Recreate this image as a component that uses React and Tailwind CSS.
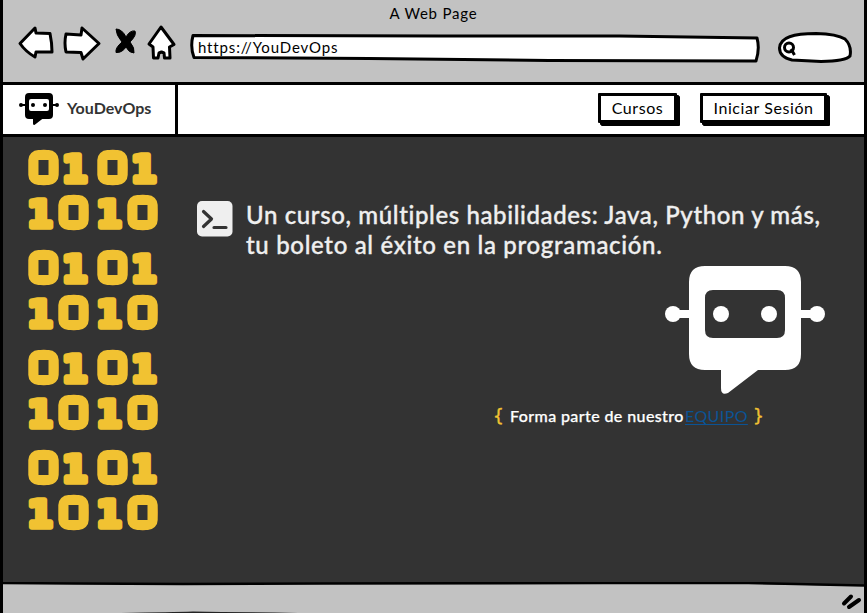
const BotIcon = ({ className }) => (
  <svg viewBox="0 0 160 128" className={className} fill="currentColor">
    <path
      fillRule="evenodd"
      d="M40 0H120Q136 0 136 16V88Q136 104 120 104H93L63 127Q56 130 56 122V104H40Q24 104 24 88V16Q24 0 40 0ZM48 24Q40 24 40 32V64Q40 72 48 72H112Q120 72 120 64V32Q120 24 112 24Z"
    />
    <path d="M8 44H25V52H8ZM135 44H152V52H135Z" />
    <circle cx="8" cy="48" r="8" />
    <circle cx="152" cy="48" r="8" />
    <circle cx="56" cy="48" r="8" />
    <circle cx="104" cy="48" r="8" />
  </svg>
);

const Binary = () => (
  <svg
    viewBox="0 0 62 80"
    className="h-[80px] w-[62px] overflow-visible fill-[#f1c232] stroke-[#f1c232] font-['DejaVu_Sans'] text-[39px] font-bold"
    strokeWidth="5.6"
    strokeLinejoin="round"
    textAnchor="middle"
  >
    <text x="15.5" y="32">0</text>
    <text x="46.8" y="32.200" className="text-[37px]">1</text>
    <text x="12" y="77.200" className="text-[37px]">1</text>
    <text x="45.5" y="77">0</text>
    <rect x="0.3" y="0" width="30.400" height="35" rx="10" stroke="none" />
    <rect x="30.300" y="45" width="30.400" height="35" rx="10" stroke="none" />
    <path d="M10.500 10H20.500V25H10.500ZM40.500 55H50.500V70H40.500Z" fill="#333" stroke="none" />
  </svg>
);

const Toolbar = () => (
  <svg viewBox="0 0 164 40" className="h-[40px] w-[164px]" fill="#fff" stroke="#000" strokeWidth="3" strokeLinejoin="round">
    <path d="M3 19.500L18 4L19 9L33 9.500Q35 19 35 28L19 28L18 33Q9 28 3 19.500Z" />
    <path d="M49 10L64 11L65 4L82 19.500L66 35L64 28.500L49 28Q47 19 49 10Z" />
    <path
      d="M99 5Q105 5 109 13Q113 6 118 7Q120 11 113 18Q118 24 117 29Q112 29 109 23Q105 29 99 28.500Q98 24 105 18Q99 11 99 5Z"
      fill="#000"
      stroke="#000"
      strokeWidth="1"
    />
    <path d="M144 3L157 20.500L152.500 23L153 34H147.500L147 29L144.500 28L142 29L141 34H136.500L136 23L132 20Z" />
  </svg>
);

const NavButton = ({ children, className }) => (
  <button
    className={
      "box-border flex h-[30px] items-center justify-center rounded-[1px] border-[3px] border-black bg-white text-[16px] tracking-[0.58px] text-black shadow-[2px_2px_0_0_#000,3px_3px_0_0_#000] " +
      className
    }
  >
    {children}
  </button>
);

const Header = () => (
  <header className="flex h-[82px] flex-col bg-[#c2c2c2]">
    <div className="flex h-[24px] items-center justify-center pt-[2px] text-[15px] tracking-[0.8px]">A Web Page</div>
    <div className="flex items-start pl-[14px]">
      <Toolbar />
      <div className="relative ml-[8px] mt-[8px] h-[32px] w-[572px]">
        <svg viewBox="0 0 572 32" className="absolute inset-0 h-full w-full" fill="#fff" stroke="#000" strokeWidth="3" strokeLinejoin="round">
          <path d="M4 3.500L250 4L430 4L568 6Q571 17 567 29L360 28.500L180 26.500L5 25.500Q1 15 4 3.500Z" />
        </svg>
        <span className="relative flex h-[30px] items-center pl-[9px] text-[15px] tracking-[0.850px]">https://YouDevOps</span>
      </div>
      <svg viewBox="0 0 78 34" className="ml-[14px] mt-[7px] h-[34px] w-[78px]" fill="#fff" stroke="#000" strokeWidth="3">
        <path d="M4.500 17C5 6 19 2.500 41 2.500Q62 3 70 8Q77 15 75 25Q71 30 46 30.500L17 29Q4.500 26 4.500 17Z" />
        <circle cx="14" cy="16.500" r="4.500" />
        <path d="M16 18L19.500 24" />
      </svg>
    </div>
  </header>
);

export default function App() {
  return (
    <div className="relative flex h-[613px] w-[867px] flex-col overflow-hidden border-l-[3px] border-r-[3px] border-black bg-[#333] font-['Lato',sans-serif] text-black">
      <Header />
      <nav className="flex h-[55px] border-y-[3px] border-black bg-white">
        <div className="flex w-[175px] items-center border-r-[3px] border-black pb-px pl-[16px]">
          <BotIcon className="h-[32px] w-[40px]" />
          <span className="ml-[8px] pb-[2px] text-[16px] font-bold text-[#333]">YouDevOps</span>
        </div>
        <div className="flex grow justify-end pr-[37px] pt-[8px]">
          <NavButton className="w-[79px]">Cursos</NavButton>
          <NavButton className="ml-[23px] w-[127px]">Iniciar Sesión</NavButton>
        </div>
      </nav>
      <main className="flex h-[445px] bg-[#333]">
        <aside className="grid h-[380px] grid-cols-[62px_62px] gap-x-[7px] gap-y-[20px] pl-[25px] pt-[13px]">
          {Array.from({ length: 8 }, (_, i) => (
            <Binary key={i} />
          ))}
        </aside>
        <section className="ml-[38px] flex grow flex-col pt-[63px]">
          <div className="flex">
            <svg viewBox="0 0 36 36" className="mt-[1px] h-[36px] w-[36px]">
              <rect width="35.500" height="35.500" rx="5" fill="#efefef" />
              <path d="M6.500 10.500L14.500 18L6.500 25.500M17 26.500H29" fill="none" stroke="#333" strokeWidth="3.200" strokeLinecap="round" strokeLinejoin="round" />
            </svg>
            <p className="ml-[13px] whitespace-nowrap text-[24px] font-medium leading-[30px] text-[#efefef] [-webkit-text-stroke:0.35px_#efefef]">
              <span className="block tracking-[0.620px]">Un curso, múltiples habilidades: Java, Python y más,</span>
              <span className="block tracking-[0.670px]">tu boleto al éxito en la programación.</span>
            </p>
          </div>
          <BotIcon className="ml-[468px] mt-[6px] h-[128px] w-[160px] text-white" />
          <div className="ml-[296px] mt-[10px] flex h-[24px] items-center whitespace-nowrap text-[16px] text-white">
            <span className="w-[17px] pt-[2px] font-['DejaVu_Sans'] text-[17px] text-[#f1c232] [-webkit-text-stroke:0.4px_#f1c232]">{"{"}</span>
            <span className="w-[175px] font-medium tracking-[0.400px] [-webkit-text-stroke:0.25px_#fff]">Forma parte de nuestro</span>
            <a className="w-[68px] tracking-[0.400px] text-[#0b5394] underline underline-offset-2">EQUIPO</a>
            <span className="pt-[2px] font-['DejaVu_Sans'] text-[17px] text-[#f1c232] [-webkit-text-stroke:0.4px_#f1c232]">{"}"}</span>
          </div>
        </section>
      </main>
      <footer className="relative h-[31px] bg-[#c2c2c2]">
        <svg viewBox="0 0 861 31" className="absolute inset-0 h-full w-full">
          <path d="M0 0H861V4L745 2L200 2L0 1Z" fill="#333" />
          <path d="M0 1L70 1.500L180 2L320 1.500L600 1L745 1L861 3.500" fill="none" stroke="#000" strokeWidth="2.500" />
          <path d="M118 31Q170 30 190 29.500Q230 30 295 31Z" fill="#222" />
          <path d="M841 21.500L848 14.500M846 25L856 18" fill="none" stroke="#000" strokeWidth="4" strokeLinecap="round" />
        </svg>
      </footer>
    </div>
  );
}
